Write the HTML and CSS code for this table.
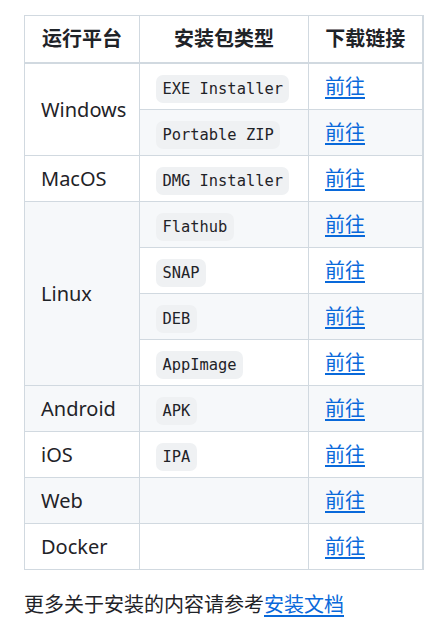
FILE: index.html
```html
<!DOCTYPE html>
<html lang="zh-CN">
<head>
    <meta charset="UTF-8">
    <meta name="viewport" content="width=device-width, initial-scale=1.0">
    <title>安装</title>
    <link rel="stylesheet" href="styles.css">
</head>
<body>
    <div class="markdown-body">
        <table>
            <colgroup>
                <col class="col-platform">
                <col class="col-type">
                <col class="col-link">
            </colgroup>
            <thead>
                <tr>
                    <th>运行平台</th>
                    <th>安装包类型</th>
                    <th>下载链接</th>
                </tr>
            </thead>
            <tbody>
                <tr>
                    <td rowspan="2">Windows</td>
                    <td><code>EXE Installer</code></td>
                    <td><a href="#">前往</a></td>
                </tr>
                <tr>
                    <td><code>Portable ZIP</code></td>
                    <td><a href="#">前往</a></td>
                </tr>
                <tr>
                    <td>MacOS</td>
                    <td><code>DMG Installer</code></td>
                    <td><a href="#">前往</a></td>
                </tr>
                <tr>
                    <td rowspan="4">Linux</td>
                    <td><code>Flathub</code></td>
                    <td><a href="#">前往</a></td>
                </tr>
                <tr>
                    <td><code>SNAP</code></td>
                    <td><a href="#">前往</a></td>
                </tr>
                <tr>
                    <td><code>DEB</code></td>
                    <td><a href="#">前往</a></td>
                </tr>
                <tr>
                    <td><code>AppImage</code></td>
                    <td><a href="#">前往</a></td>
                </tr>
                <tr>
                    <td>Android</td>
                    <td><code>APK</code></td>
                    <td><a href="#">前往</a></td>
                </tr>
                <tr>
                    <td>iOS</td>
                    <td><code>IPA</code></td>
                    <td><a href="#">前往</a></td>
                </tr>
                <tr>
                    <td>Web</td>
                    <td></td>
                    <td><a href="#">前往</a></td>
                </tr>
                <tr>
                    <td>Docker</td>
                    <td></td>
                    <td><a href="#">前往</a></td>
                </tr>
            </tbody>
        </table>

        <p>更多关于安装的内容请参考<a href="#">安装文档</a></p>
    </div>
</body>
</html>
```

FILE: styles.css
```css
:root {
    --text-primary: #1f2328;
    --link-color: #0969da;
    --border-color: #d1d9e0;
    --row-alt: #f6f8fa;
    --code-background: #eff1f3;
}

body {
    margin: 0;
    padding: 15px 24px;
    background: #fff;
}

.markdown-body {
    font-family: "Noto Sans", "Noto Sans CJK SC", sans-serif;
    font-size: 20px;
    line-height: 30px;
    color: var(--text-primary);
}

table {
    width: 398px;
    table-layout: fixed;
    border-collapse: collapse;
    border-spacing: 0;
}

.col-platform {
    width: 115px;
}

.col-type {
    width: 169px;
}

.col-link {
    width: 114px;
}

tr {
    background-color: #fff;
}

tbody tr:nth-child(2n) {
    background-color: var(--row-alt);
}

th,
td {
    border: 1px solid var(--border-color);
    padding: 7.5px 16px;
    white-space: nowrap;
}

th {
    font-weight: 700;
    text-align: center;
    padding-top: 8px;
    padding-bottom: 8px;
}

thead th {
    border-bottom-width: 2px;
}

td {
    text-align: left;
}

tr > :last-child {
    border-right-width: 2px;
}

code {
    font-family: "DejaVu Sans Mono", monospace;
    font-size: 15.4px;
    line-height: 1;
    padding: 5px 6.5px;
    border-radius: 7px;
    background-color: var(--code-background);
}

a {
    color: var(--link-color);
    text-decoration: underline;
    text-decoration-thickness: 2px;
    text-underline-offset: 3px;
}

p {
    margin: 20px 0 0;
}
```
